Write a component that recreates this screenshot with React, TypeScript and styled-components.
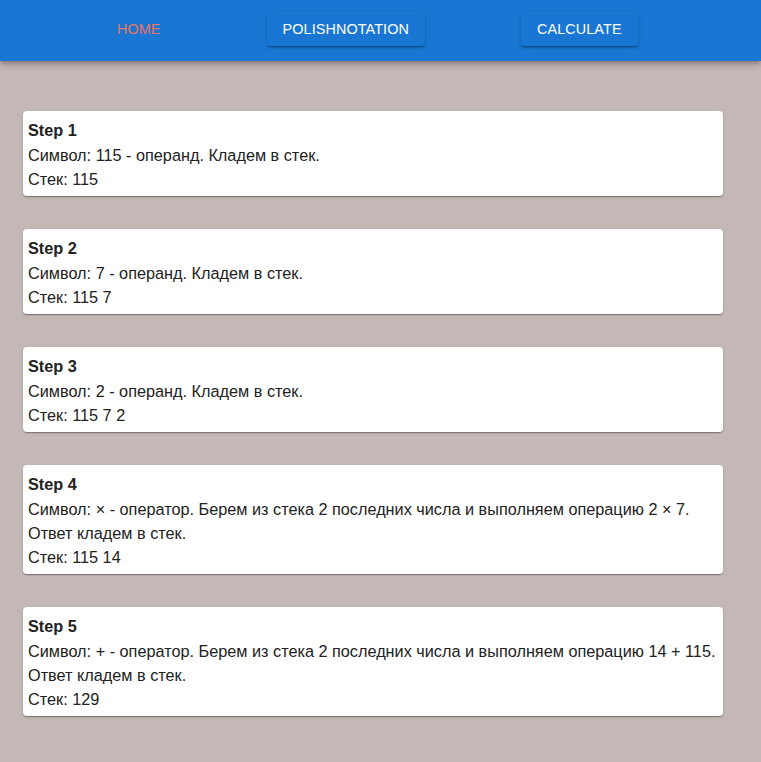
import React from "react";
import styled, { createGlobalStyle } from "styled-components";

const Global = createGlobalStyle`
  html, body { margin: 0; padding: 0; }
  body {
    background: #c4b8b7;
    font-family: "Liberation Sans", Arial, sans-serif;
    min-height: 762px;
  }
`;

const Header = styled.header`
  height: 61px;
  background: #1976d2;
  box-shadow: 0 2px 4px -1px rgba(0,0,0,0.2), 0 4px 5px 0 rgba(0,0,0,0.14), 0 1px 10px 0 rgba(0,0,0,0.12);
  display: flex;
  align-items: flex-start;
  padding: 12px 0 0 101px;
  box-sizing: border-box;
`;

const NavButton = styled.button<{ $active?: boolean; $raised?: boolean; $gap: number }>`
  margin-left: ${(p) => p.$gap}px;
  height: 34px;
  padding: 0 16px;
  border: none;
  border-radius: 4px;
  background: #1976d2;
  color: ${(p) => (p.$active ? "#e57766" : "#ffffff")};
  font-family: "Liberation Sans", Arial, sans-serif;
  font-size: 14.4px;
  text-transform: uppercase;
  letter-spacing: 0.1px;
  box-shadow: ${(p) =>
    p.$raised
      ? "0 3px 1px -2px rgba(0,0,0,0.2), 0 2px 2px 0 rgba(0,0,0,0.14), 0 1px 5px 0 rgba(0,0,0,0.12)"
      : "none"};
  cursor: pointer;
`;

const Main = styled.main`
  padding: 50px 38px 45px 23px;
  display: flex;
  flex-direction: column;
  gap: 33px;
`;

const Card = styled.section`
  background: #fff;
  border-radius: 4px;
  padding: 5px 5px 5px;
  box-shadow: 0 2px 1px -1px rgba(0,0,0,0.2), 0 1px 1px 0 rgba(0,0,0,0.14), 0 1px 3px 0 rgba(0,0,0,0.12);
  color: #222;
  font-size: 16.25px;
  line-height: 24px;
`;

const Title = styled.div`
  font-weight: bold;
  line-height: 26px;
  padding-top: 1px;
`;

const Line = styled.div``;

const steps = [
  { lines: ["Символ: 115 - операнд. Кладем в стек."], stack: "115" },
  { lines: ["Символ: 7 - операнд. Кладем в стек."], stack: "115 7" },
  { lines: ["Символ: 2 - операнд. Кладем в стек."], stack: "115 7 2" },
  {
    lines: [
      "Символ: × - оператор. Берем из стека 2 последних числа и выполняем операцию 2 × 7.",
      "Ответ кладем в стек.",
    ],
    stack: "115 14",
  },
  {
    lines: [
      "Символ: + - оператор. Берем из стека 2 последних числа и выполняем операцию 14 + 115.",
      "Ответ кладем в стек.",
    ],
    stack: "129",
  },
];

export default function App() {
  return (
    <>
      <Global />
      <Header>
        <NavButton $active $gap={0}>Home</NavButton>
        <NavButton $raised $gap={90}>PolishNotation</NavButton>
        <NavButton $raised $gap={96}>Calculate</NavButton>
      </Header>
      <Main>
        {steps.map((s, i) => (
          <Card key={i}>
            <Title>Step {i + 1}</Title>
            {s.lines.map((l, j) => (
              <Line key={j}>{l}</Line>
            ))}
            <Line>Стек: {s.stack}</Line>
          </Card>
        ))}
      </Main>
    </>
  );
}
